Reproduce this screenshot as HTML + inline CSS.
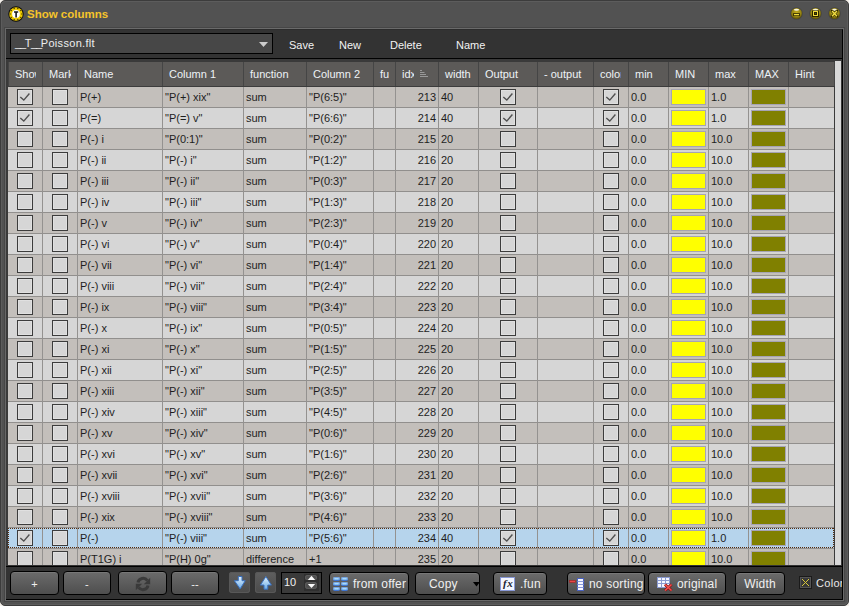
<!DOCTYPE html><html><head><meta charset="utf-8"><style>
*{margin:0;padding:0;box-sizing:border-box}
html,body{width:849px;height:606px;overflow:hidden;background:#f4f0ea}
body{font-family:"Liberation Sans",sans-serif;font-size:11px;position:relative}
.a{position:absolute}
#win{left:0;top:0;width:849px;height:606px;background:#525252;border:1px solid #3c3c3c;border-radius:5px}
#win2{left:1px;top:1px;width:847px;height:604px;border:1px solid #5c5c5c;border-radius:4px}
#title{left:27px;top:8px;font-weight:bold;font-size:11.5px;color:#f6c42a;letter-spacing:0px}
#panel{left:4px;top:27px;width:841px;height:575px;border:1px solid #464646;background:#333}
#pin{left:0;top:0;width:839px;height:573px;border:1px solid #686868;border-top-color:#6a6a6a}
#pin2{left:0;top:0;width:837px;height:571px;border-right:1px solid #000;border-bottom:1px solid #000;border-top:1px solid #2c2c2c}
#combo{left:10px;top:33px;width:263px;height:21px;border:1px solid #000;background:#474747;color:#eee}
.tb{top:39px;color:#f2f2f2;font-size:11px}
#tblbg{left:6px;top:59px;width:836px;height:506px;background:#3a3a3a}
#sep1{left:6px;top:58px;width:836px;height:1px;background:#000}
#sep2{left:6px;top:566px;width:836px;height:1px;background:#000}
#hdr{left:8px;top:62px;width:826px;height:25px;background:#5c5a58;border-bottom:1px solid #3c3c3c;border-left:1px solid #444}
.h{top:62px;height:24px;color:#eef2f6;line-height:24px;padding-left:6px;white-space:nowrap;overflow:hidden}
.hs{top:62px;width:1px;height:24px;background:#454545}
#rows{left:8px;top:87px;width:826px;height:478px;overflow:hidden}
.r{left:0;width:826px;height:21px;border-bottom:1px solid #918f8d}
.r0{background:#c3bfbb}
.r1{background:#d6d6d6}
.sel{background:#b6d4ec}
.vg{top:0;width:1px;height:478px;background:#949290}
.t{height:20px;line-height:20px;color:#1e1e1e;white-space:nowrap;overflow:hidden;padding-left:2px}
.cb{width:16px;height:16px;border:1px solid #3c3c3c;background:#d6d6d6;box-shadow:inset 0 0 0 1px #e0e0e0}
.sw{width:35px;height:16px;border:1px solid #a6a4b4}
#sb{left:835px;top:61px;width:6px;height:504px;background:#d8d8d8}
.btn{height:23px;border:1px solid #000;border-radius:4px;background:linear-gradient(#6b6b6b,#4e4e4e);color:#f0f0f0;font-size:12px;text-align:center;line-height:22px;letter-spacing:0.2px;box-shadow:inset 0 1px 0 #777}
</style></head><body>
<div id="win" class="a"></div><div id="win2" class="a"></div>
<svg class="a" style="left:8px;top:6px" width="16" height="16" viewBox="0 0 16 16"><circle cx="8" cy="8" r="7.7" fill="#0a0a0a"/><circle cx="8" cy="8" r="6.8" fill="#f0cc00"/><circle cx="13.90" cy="8.00" r="0.8" fill="#5a4a00"/><circle cx="12.77" cy="11.47" r="0.8" fill="#5a4a00"/><circle cx="9.82" cy="13.61" r="0.8" fill="#5a4a00"/><circle cx="6.18" cy="13.61" r="0.8" fill="#5a4a00"/><circle cx="3.23" cy="11.47" r="0.8" fill="#5a4a00"/><circle cx="2.10" cy="8.00" r="0.8" fill="#5a4a00"/><circle cx="3.23" cy="4.53" r="0.8" fill="#5a4a00"/><circle cx="6.18" cy="2.39" r="0.8" fill="#5a4a00"/><circle cx="9.82" cy="2.39" r="0.8" fill="#5a4a00"/><circle cx="12.77" cy="4.53" r="0.8" fill="#5a4a00"/><circle cx="8" cy="8" r="3.9" fill="#fff"/><path d="M6 5.2h4.2v1.6h-1.3v4.6h-1.6v-4.6h-1.3z" fill="#1a1a1a"/></svg>
<div id="title" class="a">Show columns</div>
<svg class="a" style="left:789px;top:6px" width="15" height="15" viewBox="-2 -2 15 15"><defs><radialGradient id="g0" cx="50%" cy="40%" r="60%"><stop offset="0" stop-color="#c0ac20"/><stop offset="0.6" stop-color="#9c8a14"/><stop offset="1" stop-color="#5a4e08"/></radialGradient></defs><circle cx="5.5" cy="5.5" r="6.3" fill="#3c3c3c" opacity="0.6"/><circle cx="5.5" cy="5.5" r="5.5" fill="url(#g0)"/><ellipse cx="5.5" cy="1.7" rx="2.6" ry="1" fill="#f8f4e0"/><rect x="2.2" y="5.1" width="6.6" height="2.9" fill="#2a2400"/><rect x="3" y="5.9" width="5" height="1.4" fill="#f0dc38"/></svg>
<svg class="a" style="left:808px;top:6px" width="15" height="15" viewBox="-2 -2 15 15"><defs><radialGradient id="g1" cx="50%" cy="40%" r="60%"><stop offset="0" stop-color="#c0ac20"/><stop offset="0.6" stop-color="#9c8a14"/><stop offset="1" stop-color="#5a4e08"/></radialGradient></defs><circle cx="5.5" cy="5.5" r="6.3" fill="#3c3c3c" opacity="0.6"/><circle cx="5.5" cy="5.5" r="5.5" fill="url(#g1)"/><ellipse cx="5.5" cy="1.7" rx="2.6" ry="1" fill="#f8f4e0"/><rect x="2" y="2.5" width="7" height="6.5" fill="#2a2400"/><rect x="3" y="3" width="5" height="5" fill="#f0dc38"/><rect x="4" y="4" width="3" height="3" fill="#2a2400"/><rect x="5.2" y="5.2" width="0.6" height="0.6" fill="#b0a020"/></svg>
<svg class="a" style="left:827px;top:6px" width="15" height="15" viewBox="-2 -2 15 15"><defs><radialGradient id="g2" cx="50%" cy="40%" r="60%"><stop offset="0" stop-color="#c0ac20"/><stop offset="0.6" stop-color="#9c8a14"/><stop offset="1" stop-color="#5a4e08"/></radialGradient></defs><circle cx="5.5" cy="5.5" r="6.3" fill="#3c3c3c" opacity="0.6"/><circle cx="5.5" cy="5.5" r="5.5" fill="url(#g2)"/><ellipse cx="5.5" cy="1.7" rx="2.6" ry="1" fill="#f8f4e0"/><path d="M3 3L8 8.2M8 3L3 8.2" stroke="#2a2400" stroke-width="2.6" stroke-linecap="round"/><path d="M3 3L8 8.2M8 3L3 8.2" stroke="#f4e040" stroke-width="1.5"/></svg>
<div id="panel" class="a"><div id="pin" class="a"><div id="pin2" class="a"></div></div></div>
<div id="combo" class="a"><span class="a" style="left:4px;top:3px;font-size:11px;white-space:nowrap"><span style="letter-spacing:-1.2px">__</span><span style="letter-spacing:-0.6px">T</span><span style="letter-spacing:-1.2px">__</span><span style="letter-spacing:0.3px">Poisson.flt</span></span><svg class="a" style="left:248px;top:8px" width="9" height="6"><path d="M0 0h9l-4.5 5z" fill="#ccc"/></svg></div>
<div class="a tb" style="left:289px">Save</div>
<div class="a tb" style="left:339px">New</div>
<div class="a tb" style="left:390px">Delete</div>
<div class="a tb" style="left:456px">Name</div>
<div id="sep1" class="a"></div><div id="tblbg" class="a"></div><div id="sep2" class="a"></div>
<div id="hdr" class="a"></div>
<div class="a h" style="left:9px;width:27px">Show</div>
<div class="a hs" style="left:42px"></div>
<div class="a h" style="left:43px;width:28px">Mark</div>
<div class="a hs" style="left:77px"></div>
<div class="a h" style="left:78px;width:78px">Name</div>
<div class="a hs" style="left:162px"></div>
<div class="a h" style="left:163px;width:74px">Column 1</div>
<div class="a hs" style="left:243px"></div>
<div class="a h" style="left:244px;width:56px">function</div>
<div class="a hs" style="left:306px"></div>
<div class="a h" style="left:307px;width:60px">Column 2</div>
<div class="a hs" style="left:373px"></div>
<div class="a h" style="left:374px;width:15px">function 2</div>
<div class="a hs" style="left:395px"></div>
<div class="a h" style="left:396px;width:18px">idx</div>
<div class="a hs" style="left:438px"></div>
<div class="a h" style="left:439px;width:34px">width</div>
<div class="a hs" style="left:478px"></div>
<div class="a h" style="left:479px;width:52px">Output</div>
<div class="a hs" style="left:537px"></div>
<div class="a h" style="left:538px;width:49px">- output</div>
<div class="a hs" style="left:593px"></div>
<div class="a h" style="left:594px;width:27px">color</div>
<div class="a hs" style="left:628px"></div>
<div class="a h" style="left:629px;width:33px">min</div>
<div class="a hs" style="left:668px"></div>
<div class="a h" style="left:669px;width:33px">MIN</div>
<div class="a hs" style="left:708px"></div>
<div class="a h" style="left:709px;width:33px">max</div>
<div class="a hs" style="left:748px"></div>
<div class="a h" style="left:749px;width:33px">MAX</div>
<div class="a hs" style="left:788px"></div>
<div class="a h" style="left:789px;width:39px">Hint</div>
<div class="a hs" style="left:834px"></div>
<svg class="a" style="left:420px;top:70px" width="9" height="8"><path d="M0 0.5h2M0 2.5h4.5M0 4.5h6M0 6.5h8" stroke="#999" stroke-width="1"/></svg>
<div id="rows" class="a">
<div class="a r r0" style="top:0px">
<div class="a cb" style="left:9px;top:2px"><svg class="a" style="left:1px;top:2px" width="12" height="10"><path d="M1.3 5L4.8 8.1L10.4 1.5" fill="none" stroke="#505050" stroke-width="1.4"/></svg></div>
<div class="a cb" style="left:44px;top:2px"></div>
<div class="a t" style="left:70px;width:84px">P(+)</div>
<div class="a t" style="left:155px;width:80px">"P(+) xix"</div>
<div class="a t" style="left:236px;width:62px">sum</div>
<div class="a t" style="left:299px;width:66px">"P(6:5)"</div>
<div class="a t" style="left:388px;width:42px;text-align:right;padding-right:2px;padding-left:0">213</div>
<div class="a t" style="left:431px;width:39px">40</div>
<div class="a cb" style="left:492px;top:2px"><svg class="a" style="left:1px;top:2px" width="12" height="10"><path d="M1.3 5L4.8 8.1L10.4 1.5" fill="none" stroke="#505050" stroke-width="1.4"/></svg></div>
<div class="a cb" style="left:595px;top:2px"><svg class="a" style="left:1px;top:2px" width="12" height="10"><path d="M1.3 5L4.8 8.1L10.4 1.5" fill="none" stroke="#505050" stroke-width="1.4"/></svg></div>
<div class="a t" style="left:621px;width:39px">0.0</div>
<div class="a sw" style="left:663px;top:2px;background:#ffff00"></div>
<div class="a t" style="left:701px;width:39px">1.0</div>
<div class="a sw" style="left:743px;top:2px;background:#808000"></div>
</div>
<div class="a r r1" style="top:21px">
<div class="a cb" style="left:9px;top:2px"><svg class="a" style="left:1px;top:2px" width="12" height="10"><path d="M1.3 5L4.8 8.1L10.4 1.5" fill="none" stroke="#505050" stroke-width="1.4"/></svg></div>
<div class="a cb" style="left:44px;top:2px"></div>
<div class="a t" style="left:70px;width:84px">P(=)</div>
<div class="a t" style="left:155px;width:80px">"P(=) v"</div>
<div class="a t" style="left:236px;width:62px">sum</div>
<div class="a t" style="left:299px;width:66px">"P(6:6)"</div>
<div class="a t" style="left:388px;width:42px;text-align:right;padding-right:2px;padding-left:0">214</div>
<div class="a t" style="left:431px;width:39px">40</div>
<div class="a cb" style="left:492px;top:2px"><svg class="a" style="left:1px;top:2px" width="12" height="10"><path d="M1.3 5L4.8 8.1L10.4 1.5" fill="none" stroke="#505050" stroke-width="1.4"/></svg></div>
<div class="a cb" style="left:595px;top:2px"><svg class="a" style="left:1px;top:2px" width="12" height="10"><path d="M1.3 5L4.8 8.1L10.4 1.5" fill="none" stroke="#505050" stroke-width="1.4"/></svg></div>
<div class="a t" style="left:621px;width:39px">0.0</div>
<div class="a sw" style="left:663px;top:2px;background:#ffff00"></div>
<div class="a t" style="left:701px;width:39px">1.0</div>
<div class="a sw" style="left:743px;top:2px;background:#808000"></div>
</div>
<div class="a r r0" style="top:42px">
<div class="a cb" style="left:9px;top:2px"></div>
<div class="a cb" style="left:44px;top:2px"></div>
<div class="a t" style="left:70px;width:84px">P(-) i</div>
<div class="a t" style="left:155px;width:80px">"P(0:1)"</div>
<div class="a t" style="left:236px;width:62px">sum</div>
<div class="a t" style="left:299px;width:66px">"P(0:2)"</div>
<div class="a t" style="left:388px;width:42px;text-align:right;padding-right:2px;padding-left:0">215</div>
<div class="a t" style="left:431px;width:39px">20</div>
<div class="a cb" style="left:492px;top:2px"></div>
<div class="a cb" style="left:595px;top:2px"></div>
<div class="a t" style="left:621px;width:39px">0.0</div>
<div class="a sw" style="left:663px;top:2px;background:#ffff00"></div>
<div class="a t" style="left:701px;width:39px">10.0</div>
<div class="a sw" style="left:743px;top:2px;background:#808000"></div>
</div>
<div class="a r r1" style="top:63px">
<div class="a cb" style="left:9px;top:2px"></div>
<div class="a cb" style="left:44px;top:2px"></div>
<div class="a t" style="left:70px;width:84px">P(-) ii</div>
<div class="a t" style="left:155px;width:80px">"P(-) i"</div>
<div class="a t" style="left:236px;width:62px">sum</div>
<div class="a t" style="left:299px;width:66px">"P(1:2)"</div>
<div class="a t" style="left:388px;width:42px;text-align:right;padding-right:2px;padding-left:0">216</div>
<div class="a t" style="left:431px;width:39px">20</div>
<div class="a cb" style="left:492px;top:2px"></div>
<div class="a cb" style="left:595px;top:2px"></div>
<div class="a t" style="left:621px;width:39px">0.0</div>
<div class="a sw" style="left:663px;top:2px;background:#ffff00"></div>
<div class="a t" style="left:701px;width:39px">10.0</div>
<div class="a sw" style="left:743px;top:2px;background:#808000"></div>
</div>
<div class="a r r0" style="top:84px">
<div class="a cb" style="left:9px;top:2px"></div>
<div class="a cb" style="left:44px;top:2px"></div>
<div class="a t" style="left:70px;width:84px">P(-) iii</div>
<div class="a t" style="left:155px;width:80px">"P(-) ii"</div>
<div class="a t" style="left:236px;width:62px">sum</div>
<div class="a t" style="left:299px;width:66px">"P(0:3)"</div>
<div class="a t" style="left:388px;width:42px;text-align:right;padding-right:2px;padding-left:0">217</div>
<div class="a t" style="left:431px;width:39px">20</div>
<div class="a cb" style="left:492px;top:2px"></div>
<div class="a cb" style="left:595px;top:2px"></div>
<div class="a t" style="left:621px;width:39px">0.0</div>
<div class="a sw" style="left:663px;top:2px;background:#ffff00"></div>
<div class="a t" style="left:701px;width:39px">10.0</div>
<div class="a sw" style="left:743px;top:2px;background:#808000"></div>
</div>
<div class="a r r1" style="top:105px">
<div class="a cb" style="left:9px;top:2px"></div>
<div class="a cb" style="left:44px;top:2px"></div>
<div class="a t" style="left:70px;width:84px">P(-) iv</div>
<div class="a t" style="left:155px;width:80px">"P(-) iii"</div>
<div class="a t" style="left:236px;width:62px">sum</div>
<div class="a t" style="left:299px;width:66px">"P(1:3)"</div>
<div class="a t" style="left:388px;width:42px;text-align:right;padding-right:2px;padding-left:0">218</div>
<div class="a t" style="left:431px;width:39px">20</div>
<div class="a cb" style="left:492px;top:2px"></div>
<div class="a cb" style="left:595px;top:2px"></div>
<div class="a t" style="left:621px;width:39px">0.0</div>
<div class="a sw" style="left:663px;top:2px;background:#ffff00"></div>
<div class="a t" style="left:701px;width:39px">10.0</div>
<div class="a sw" style="left:743px;top:2px;background:#808000"></div>
</div>
<div class="a r r0" style="top:126px">
<div class="a cb" style="left:9px;top:2px"></div>
<div class="a cb" style="left:44px;top:2px"></div>
<div class="a t" style="left:70px;width:84px">P(-) v</div>
<div class="a t" style="left:155px;width:80px">"P(-) iv"</div>
<div class="a t" style="left:236px;width:62px">sum</div>
<div class="a t" style="left:299px;width:66px">"P(2:3)"</div>
<div class="a t" style="left:388px;width:42px;text-align:right;padding-right:2px;padding-left:0">219</div>
<div class="a t" style="left:431px;width:39px">20</div>
<div class="a cb" style="left:492px;top:2px"></div>
<div class="a cb" style="left:595px;top:2px"></div>
<div class="a t" style="left:621px;width:39px">0.0</div>
<div class="a sw" style="left:663px;top:2px;background:#ffff00"></div>
<div class="a t" style="left:701px;width:39px">10.0</div>
<div class="a sw" style="left:743px;top:2px;background:#808000"></div>
</div>
<div class="a r r1" style="top:147px">
<div class="a cb" style="left:9px;top:2px"></div>
<div class="a cb" style="left:44px;top:2px"></div>
<div class="a t" style="left:70px;width:84px">P(-) vi</div>
<div class="a t" style="left:155px;width:80px">"P(-) v"</div>
<div class="a t" style="left:236px;width:62px">sum</div>
<div class="a t" style="left:299px;width:66px">"P(0:4)"</div>
<div class="a t" style="left:388px;width:42px;text-align:right;padding-right:2px;padding-left:0">220</div>
<div class="a t" style="left:431px;width:39px">20</div>
<div class="a cb" style="left:492px;top:2px"></div>
<div class="a cb" style="left:595px;top:2px"></div>
<div class="a t" style="left:621px;width:39px">0.0</div>
<div class="a sw" style="left:663px;top:2px;background:#ffff00"></div>
<div class="a t" style="left:701px;width:39px">10.0</div>
<div class="a sw" style="left:743px;top:2px;background:#808000"></div>
</div>
<div class="a r r0" style="top:168px">
<div class="a cb" style="left:9px;top:2px"></div>
<div class="a cb" style="left:44px;top:2px"></div>
<div class="a t" style="left:70px;width:84px">P(-) vii</div>
<div class="a t" style="left:155px;width:80px">"P(-) vi"</div>
<div class="a t" style="left:236px;width:62px">sum</div>
<div class="a t" style="left:299px;width:66px">"P(1:4)"</div>
<div class="a t" style="left:388px;width:42px;text-align:right;padding-right:2px;padding-left:0">221</div>
<div class="a t" style="left:431px;width:39px">20</div>
<div class="a cb" style="left:492px;top:2px"></div>
<div class="a cb" style="left:595px;top:2px"></div>
<div class="a t" style="left:621px;width:39px">0.0</div>
<div class="a sw" style="left:663px;top:2px;background:#ffff00"></div>
<div class="a t" style="left:701px;width:39px">10.0</div>
<div class="a sw" style="left:743px;top:2px;background:#808000"></div>
</div>
<div class="a r r1" style="top:189px">
<div class="a cb" style="left:9px;top:2px"></div>
<div class="a cb" style="left:44px;top:2px"></div>
<div class="a t" style="left:70px;width:84px">P(-) viii</div>
<div class="a t" style="left:155px;width:80px">"P(-) vii"</div>
<div class="a t" style="left:236px;width:62px">sum</div>
<div class="a t" style="left:299px;width:66px">"P(2:4)"</div>
<div class="a t" style="left:388px;width:42px;text-align:right;padding-right:2px;padding-left:0">222</div>
<div class="a t" style="left:431px;width:39px">20</div>
<div class="a cb" style="left:492px;top:2px"></div>
<div class="a cb" style="left:595px;top:2px"></div>
<div class="a t" style="left:621px;width:39px">0.0</div>
<div class="a sw" style="left:663px;top:2px;background:#ffff00"></div>
<div class="a t" style="left:701px;width:39px">10.0</div>
<div class="a sw" style="left:743px;top:2px;background:#808000"></div>
</div>
<div class="a r r0" style="top:210px">
<div class="a cb" style="left:9px;top:2px"></div>
<div class="a cb" style="left:44px;top:2px"></div>
<div class="a t" style="left:70px;width:84px">P(-) ix</div>
<div class="a t" style="left:155px;width:80px">"P(-) viii"</div>
<div class="a t" style="left:236px;width:62px">sum</div>
<div class="a t" style="left:299px;width:66px">"P(3:4)"</div>
<div class="a t" style="left:388px;width:42px;text-align:right;padding-right:2px;padding-left:0">223</div>
<div class="a t" style="left:431px;width:39px">20</div>
<div class="a cb" style="left:492px;top:2px"></div>
<div class="a cb" style="left:595px;top:2px"></div>
<div class="a t" style="left:621px;width:39px">0.0</div>
<div class="a sw" style="left:663px;top:2px;background:#ffff00"></div>
<div class="a t" style="left:701px;width:39px">10.0</div>
<div class="a sw" style="left:743px;top:2px;background:#808000"></div>
</div>
<div class="a r r1" style="top:231px">
<div class="a cb" style="left:9px;top:2px"></div>
<div class="a cb" style="left:44px;top:2px"></div>
<div class="a t" style="left:70px;width:84px">P(-) x</div>
<div class="a t" style="left:155px;width:80px">"P(-) ix"</div>
<div class="a t" style="left:236px;width:62px">sum</div>
<div class="a t" style="left:299px;width:66px">"P(0:5)"</div>
<div class="a t" style="left:388px;width:42px;text-align:right;padding-right:2px;padding-left:0">224</div>
<div class="a t" style="left:431px;width:39px">20</div>
<div class="a cb" style="left:492px;top:2px"></div>
<div class="a cb" style="left:595px;top:2px"></div>
<div class="a t" style="left:621px;width:39px">0.0</div>
<div class="a sw" style="left:663px;top:2px;background:#ffff00"></div>
<div class="a t" style="left:701px;width:39px">10.0</div>
<div class="a sw" style="left:743px;top:2px;background:#808000"></div>
</div>
<div class="a r r0" style="top:252px">
<div class="a cb" style="left:9px;top:2px"></div>
<div class="a cb" style="left:44px;top:2px"></div>
<div class="a t" style="left:70px;width:84px">P(-) xi</div>
<div class="a t" style="left:155px;width:80px">"P(-) x"</div>
<div class="a t" style="left:236px;width:62px">sum</div>
<div class="a t" style="left:299px;width:66px">"P(1:5)"</div>
<div class="a t" style="left:388px;width:42px;text-align:right;padding-right:2px;padding-left:0">225</div>
<div class="a t" style="left:431px;width:39px">20</div>
<div class="a cb" style="left:492px;top:2px"></div>
<div class="a cb" style="left:595px;top:2px"></div>
<div class="a t" style="left:621px;width:39px">0.0</div>
<div class="a sw" style="left:663px;top:2px;background:#ffff00"></div>
<div class="a t" style="left:701px;width:39px">10.0</div>
<div class="a sw" style="left:743px;top:2px;background:#808000"></div>
</div>
<div class="a r r1" style="top:273px">
<div class="a cb" style="left:9px;top:2px"></div>
<div class="a cb" style="left:44px;top:2px"></div>
<div class="a t" style="left:70px;width:84px">P(-) xii</div>
<div class="a t" style="left:155px;width:80px">"P(-) xi"</div>
<div class="a t" style="left:236px;width:62px">sum</div>
<div class="a t" style="left:299px;width:66px">"P(2:5)"</div>
<div class="a t" style="left:388px;width:42px;text-align:right;padding-right:2px;padding-left:0">226</div>
<div class="a t" style="left:431px;width:39px">20</div>
<div class="a cb" style="left:492px;top:2px"></div>
<div class="a cb" style="left:595px;top:2px"></div>
<div class="a t" style="left:621px;width:39px">0.0</div>
<div class="a sw" style="left:663px;top:2px;background:#ffff00"></div>
<div class="a t" style="left:701px;width:39px">10.0</div>
<div class="a sw" style="left:743px;top:2px;background:#808000"></div>
</div>
<div class="a r r0" style="top:294px">
<div class="a cb" style="left:9px;top:2px"></div>
<div class="a cb" style="left:44px;top:2px"></div>
<div class="a t" style="left:70px;width:84px">P(-) xiii</div>
<div class="a t" style="left:155px;width:80px">"P(-) xii"</div>
<div class="a t" style="left:236px;width:62px">sum</div>
<div class="a t" style="left:299px;width:66px">"P(3:5)"</div>
<div class="a t" style="left:388px;width:42px;text-align:right;padding-right:2px;padding-left:0">227</div>
<div class="a t" style="left:431px;width:39px">20</div>
<div class="a cb" style="left:492px;top:2px"></div>
<div class="a cb" style="left:595px;top:2px"></div>
<div class="a t" style="left:621px;width:39px">0.0</div>
<div class="a sw" style="left:663px;top:2px;background:#ffff00"></div>
<div class="a t" style="left:701px;width:39px">10.0</div>
<div class="a sw" style="left:743px;top:2px;background:#808000"></div>
</div>
<div class="a r r1" style="top:315px">
<div class="a cb" style="left:9px;top:2px"></div>
<div class="a cb" style="left:44px;top:2px"></div>
<div class="a t" style="left:70px;width:84px">P(-) xiv</div>
<div class="a t" style="left:155px;width:80px">"P(-) xiii"</div>
<div class="a t" style="left:236px;width:62px">sum</div>
<div class="a t" style="left:299px;width:66px">"P(4:5)"</div>
<div class="a t" style="left:388px;width:42px;text-align:right;padding-right:2px;padding-left:0">228</div>
<div class="a t" style="left:431px;width:39px">20</div>
<div class="a cb" style="left:492px;top:2px"></div>
<div class="a cb" style="left:595px;top:2px"></div>
<div class="a t" style="left:621px;width:39px">0.0</div>
<div class="a sw" style="left:663px;top:2px;background:#ffff00"></div>
<div class="a t" style="left:701px;width:39px">10.0</div>
<div class="a sw" style="left:743px;top:2px;background:#808000"></div>
</div>
<div class="a r r0" style="top:336px">
<div class="a cb" style="left:9px;top:2px"></div>
<div class="a cb" style="left:44px;top:2px"></div>
<div class="a t" style="left:70px;width:84px">P(-) xv</div>
<div class="a t" style="left:155px;width:80px">"P(-) xiv"</div>
<div class="a t" style="left:236px;width:62px">sum</div>
<div class="a t" style="left:299px;width:66px">"P(0:6)"</div>
<div class="a t" style="left:388px;width:42px;text-align:right;padding-right:2px;padding-left:0">229</div>
<div class="a t" style="left:431px;width:39px">20</div>
<div class="a cb" style="left:492px;top:2px"></div>
<div class="a cb" style="left:595px;top:2px"></div>
<div class="a t" style="left:621px;width:39px">0.0</div>
<div class="a sw" style="left:663px;top:2px;background:#ffff00"></div>
<div class="a t" style="left:701px;width:39px">10.0</div>
<div class="a sw" style="left:743px;top:2px;background:#808000"></div>
</div>
<div class="a r r1" style="top:357px">
<div class="a cb" style="left:9px;top:2px"></div>
<div class="a cb" style="left:44px;top:2px"></div>
<div class="a t" style="left:70px;width:84px">P(-) xvi</div>
<div class="a t" style="left:155px;width:80px">"P(-) xv"</div>
<div class="a t" style="left:236px;width:62px">sum</div>
<div class="a t" style="left:299px;width:66px">"P(1:6)"</div>
<div class="a t" style="left:388px;width:42px;text-align:right;padding-right:2px;padding-left:0">230</div>
<div class="a t" style="left:431px;width:39px">20</div>
<div class="a cb" style="left:492px;top:2px"></div>
<div class="a cb" style="left:595px;top:2px"></div>
<div class="a t" style="left:621px;width:39px">0.0</div>
<div class="a sw" style="left:663px;top:2px;background:#ffff00"></div>
<div class="a t" style="left:701px;width:39px">10.0</div>
<div class="a sw" style="left:743px;top:2px;background:#808000"></div>
</div>
<div class="a r r0" style="top:378px">
<div class="a cb" style="left:9px;top:2px"></div>
<div class="a cb" style="left:44px;top:2px"></div>
<div class="a t" style="left:70px;width:84px">P(-) xvii</div>
<div class="a t" style="left:155px;width:80px">"P(-) xvi"</div>
<div class="a t" style="left:236px;width:62px">sum</div>
<div class="a t" style="left:299px;width:66px">"P(2:6)"</div>
<div class="a t" style="left:388px;width:42px;text-align:right;padding-right:2px;padding-left:0">231</div>
<div class="a t" style="left:431px;width:39px">20</div>
<div class="a cb" style="left:492px;top:2px"></div>
<div class="a cb" style="left:595px;top:2px"></div>
<div class="a t" style="left:621px;width:39px">0.0</div>
<div class="a sw" style="left:663px;top:2px;background:#ffff00"></div>
<div class="a t" style="left:701px;width:39px">10.0</div>
<div class="a sw" style="left:743px;top:2px;background:#808000"></div>
</div>
<div class="a r r1" style="top:399px">
<div class="a cb" style="left:9px;top:2px"></div>
<div class="a cb" style="left:44px;top:2px"></div>
<div class="a t" style="left:70px;width:84px">P(-) xviii</div>
<div class="a t" style="left:155px;width:80px">"P(-) xvii"</div>
<div class="a t" style="left:236px;width:62px">sum</div>
<div class="a t" style="left:299px;width:66px">"P(3:6)"</div>
<div class="a t" style="left:388px;width:42px;text-align:right;padding-right:2px;padding-left:0">232</div>
<div class="a t" style="left:431px;width:39px">20</div>
<div class="a cb" style="left:492px;top:2px"></div>
<div class="a cb" style="left:595px;top:2px"></div>
<div class="a t" style="left:621px;width:39px">0.0</div>
<div class="a sw" style="left:663px;top:2px;background:#ffff00"></div>
<div class="a t" style="left:701px;width:39px">10.0</div>
<div class="a sw" style="left:743px;top:2px;background:#808000"></div>
</div>
<div class="a r r0" style="top:420px">
<div class="a cb" style="left:9px;top:2px"></div>
<div class="a cb" style="left:44px;top:2px"></div>
<div class="a t" style="left:70px;width:84px">P(-) xix</div>
<div class="a t" style="left:155px;width:80px">"P(-) xviii"</div>
<div class="a t" style="left:236px;width:62px">sum</div>
<div class="a t" style="left:299px;width:66px">"P(4:6)"</div>
<div class="a t" style="left:388px;width:42px;text-align:right;padding-right:2px;padding-left:0">233</div>
<div class="a t" style="left:431px;width:39px">20</div>
<div class="a cb" style="left:492px;top:2px"></div>
<div class="a cb" style="left:595px;top:2px"></div>
<div class="a t" style="left:621px;width:39px">0.0</div>
<div class="a sw" style="left:663px;top:2px;background:#ffff00"></div>
<div class="a t" style="left:701px;width:39px">10.0</div>
<div class="a sw" style="left:743px;top:2px;background:#808000"></div>
</div>
<div class="a r sel" style="top:441px">
<div class="a cb" style="left:9px;top:2px"><svg class="a" style="left:1px;top:2px" width="12" height="10"><path d="M1.3 5L4.8 8.1L10.4 1.5" fill="none" stroke="#505050" stroke-width="1.4"/></svg></div>
<div class="a cb" style="left:44px;top:2px"></div>
<div class="a t" style="left:70px;width:84px">P(-)</div>
<div class="a t" style="left:155px;width:80px">"P(-) viii"</div>
<div class="a t" style="left:236px;width:62px">sum</div>
<div class="a t" style="left:299px;width:66px">"P(5:6)"</div>
<div class="a t" style="left:388px;width:42px;text-align:right;padding-right:2px;padding-left:0">234</div>
<div class="a t" style="left:431px;width:39px">40</div>
<div class="a cb" style="left:492px;top:2px"><svg class="a" style="left:1px;top:2px" width="12" height="10"><path d="M1.3 5L4.8 8.1L10.4 1.5" fill="none" stroke="#505050" stroke-width="1.4"/></svg></div>
<div class="a cb" style="left:595px;top:2px"><svg class="a" style="left:1px;top:2px" width="12" height="10"><path d="M1.3 5L4.8 8.1L10.4 1.5" fill="none" stroke="#505050" stroke-width="1.4"/></svg></div>
<div class="a t" style="left:621px;width:39px">0.0</div>
<div class="a sw" style="left:663px;top:2px;background:#ffff00"></div>
<div class="a t" style="left:701px;width:39px">1.0</div>
<div class="a sw" style="left:743px;top:2px;background:#808000"></div>
</div>
<div class="a r r0" style="top:462px">
<div class="a cb" style="left:9px;top:2px"></div>
<div class="a cb" style="left:44px;top:2px"></div>
<div class="a t" style="left:70px;width:84px">P(T1G) i</div>
<div class="a t" style="left:155px;width:80px">"P(H) 0g"</div>
<div class="a t" style="left:236px;width:62px">difference</div>
<div class="a t" style="left:299px;width:66px">+1</div>
<div class="a t" style="left:388px;width:42px;text-align:right;padding-right:2px;padding-left:0">235</div>
<div class="a t" style="left:431px;width:39px">20</div>
<div class="a cb" style="left:492px;top:2px"></div>
<div class="a cb" style="left:595px;top:2px"></div>
<div class="a t" style="left:621px;width:39px">0.0</div>
<div class="a sw" style="left:663px;top:2px;background:#ffff00"></div>
<div class="a t" style="left:701px;width:39px">10.0</div>
<div class="a sw" style="left:743px;top:2px;background:#808000"></div>
</div>
<div class="a vg" style="left:34px"></div>
<div class="a vg" style="left:69px"></div>
<div class="a vg" style="left:154px"></div>
<div class="a vg" style="left:235px"></div>
<div class="a vg" style="left:298px"></div>
<div class="a vg" style="left:365px"></div>
<div class="a vg" style="left:387px"></div>
<div class="a vg" style="left:430px"></div>
<div class="a vg" style="left:470px"></div>
<div class="a vg" style="left:529px"></div>
<div class="a vg" style="left:585px"></div>
<div class="a vg" style="left:620px"></div>
<div class="a vg" style="left:660px"></div>
<div class="a vg" style="left:700px"></div>
<div class="a vg" style="left:740px"></div>
<div class="a vg" style="left:780px"></div>
<div class="a vg" style="left:826px"></div>
</div>
<div class="a" style="left:8px;top:528px;width:826px;height:1px;background:repeating-linear-gradient(90deg,#5a2a08 0 1px,transparent 1px 2px)"></div>
<div class="a" style="left:8px;top:547px;width:826px;height:1px;background:repeating-linear-gradient(90deg,#5a2a08 0 1px,transparent 1px 2px)"></div>
<div class="a" style="left:8px;top:528px;width:1px;height:20px;background:repeating-linear-gradient(180deg,#5a2a08 0 1px,transparent 1px 2px)"></div>
<div class="a" style="left:833px;top:528px;width:1px;height:20px;background:repeating-linear-gradient(180deg,#5a2a08 0 1px,transparent 1px 2px)"></div>
<div id="sb" class="a"></div>
<div class="a btn" style="left:10px;top:571px;width:49px;height:24px;line-height:24px;font-size:11px">+</div>
<div class="a btn" style="left:63px;top:571px;width:48px;height:24px;line-height:24px;font-size:11px">-</div>
<div class="a btn" style="left:118px;top:571px;width:49px;height:24px;line-height:24px;font-size:11px"></div>
<div class="a btn" style="left:171px;top:571px;width:48px;height:24px;line-height:24px;font-size:11px">--</div>
<svg class="a" style="left:132px;top:574px" width="22" height="20" viewBox="0 0 22 20"><g fill="none" stroke="#3a3a3a" stroke-width="3"><path d="M6 8.6A5.2 5.2 0 0 1 15.4 6.6"/><path d="M16 11.4A5.2 5.2 0 0 1 6.6 13.4"/></g><path d="M18.2 3.8V10.2H11.8z" fill="#3a3a3a"/><path d="M3.8 16.2V9.8H10.2z" fill="#3a3a3a"/></svg>
<div class="a" style="left:229px;top:572px;width:21px;height:21px;border-radius:3px;background:linear-gradient(#5f5f5f,#4a4a4a);box-shadow:inset 0 0 0 1px #585858"></div>
<div class="a" style="left:255px;top:572px;width:21px;height:21px;border-radius:3px;background:linear-gradient(#5f5f5f,#4a4a4a);box-shadow:inset 0 0 0 1px #585858"></div>
<svg class="a" style="left:229px;top:572px" width="22" height="22" viewBox="0 0 22 22"><defs><linearGradient id="ab" x1="0" y1="0" x2="0" y2="1"><stop offset="0" stop-color="#e4f4ff"/><stop offset="1" stop-color="#6aaae6"/></linearGradient></defs><path d="M9.3 4.5H13V8.7H16.2L11.15 17L5.4 8.7H9.3z" fill="url(#ab)" stroke="#3870c0" stroke-width="1" stroke-linejoin="round"/></svg>
<svg class="a" style="left:255px;top:572px" width="22" height="22" viewBox="0 0 22 22"><path d="M10.9 4.6L16.4 13.1H12.8V17.2H9V13.1H5.4z" fill="url(#ab)" stroke="#3870c0" stroke-width="1" stroke-linejoin="round"/></svg>
<div class="a" style="left:281px;top:572px;width:41px;height:22px;border:1px solid #000;background:#3a3a3a"></div>
<div class="a" style="left:284px;top:576px;color:#f0f0f0;font-size:11px">10</div>
<div class="a" style="left:304px;top:574px;width:15px;height:17px;background:#2f2f2f"></div>
<div class="a" style="left:305px;top:575px;width:12px;height:5px;border-radius:2.5px;background:#4e4e4e;box-shadow:inset 0 0 0 1px #5a5a5a"></div>
<div class="a" style="left:305px;top:582px;width:12px;height:7px;border-radius:3px;background:#4e4e4e;box-shadow:inset 0 0 0 1px #5a5a5a"></div>
<svg class="a" style="left:305px;top:575px" width="12" height="14"><path d="M2.8 4.9L6.5 0.8L10.2 4.9z" fill="#fafafa"/><path d="M2.8 9L6.5 13L10.2 9z" fill="#fafafa"/></svg>
<div class="a btn" style="left:329px;top:572px;width:80px;text-align:left;padding-left:23px">from offer</div>
<svg class="a" style="left:333px;top:577px" width="16" height="15"><defs><linearGradient id="bb" x1="0" y1="0" x2="0" y2="1"><stop offset="0" stop-color="#c8ecff"/><stop offset="0.55" stop-color="#98d0f8"/><stop offset="1" stop-color="#2a5cc0"/></linearGradient></defs><rect x="0" y="0" width="7" height="4" rx="1.8" fill="url(#bb)"/><rect x="0.5" y="0.5" width="6" height="3" rx="1.5" fill="none" stroke="#3a70d0" stroke-width="0.8" opacity="0.7"/><rect x="0" y="5" width="7" height="4" rx="1.8" fill="url(#bb)"/><rect x="0.5" y="5.5" width="6" height="3" rx="1.5" fill="none" stroke="#3a70d0" stroke-width="0.8" opacity="0.7"/><rect x="0" y="10" width="7" height="4" rx="1.8" fill="url(#bb)"/><rect x="0.5" y="10.5" width="6" height="3" rx="1.5" fill="none" stroke="#3a70d0" stroke-width="0.8" opacity="0.7"/><rect x="8" y="0" width="7" height="4" rx="1.8" fill="url(#bb)"/><rect x="8.5" y="0.5" width="6" height="3" rx="1.5" fill="none" stroke="#3a70d0" stroke-width="0.8" opacity="0.7"/><rect x="8" y="5" width="7" height="4" rx="1.8" fill="url(#bb)"/><rect x="8.5" y="5.5" width="6" height="3" rx="1.5" fill="none" stroke="#3a70d0" stroke-width="0.8" opacity="0.7"/><rect x="8" y="10" width="7" height="4" rx="1.8" fill="url(#bb)"/><rect x="8.5" y="10.5" width="6" height="3" rx="1.5" fill="none" stroke="#3a70d0" stroke-width="0.8" opacity="0.7"/></svg>
<div class="a btn" style="left:415px;top:572px;width:65px;text-align:left;padding-left:13px">Copy</div>
<svg class="a" style="left:473px;top:582px" width="7" height="5"><path d="M0 0h7L3.5 4.5z" fill="#000"/></svg>
<div class="a btn" style="left:493px;top:572px;width:54px;text-align:left;padding-left:26px">.fun</div>
<div class="a" style="left:500px;top:577px;width:15px;height:14px;border:1px solid #8898d8;background:#f4f6ff"></div>
<div class="a" style="left:503px;top:577px;font-family:'Liberation Serif',serif;font-style:italic;font-weight:bold;font-size:11px;letter-spacing:0.6px;color:#1a2030">fx</div>
<div class="a btn" style="left:567px;top:572px;width:78px;text-align:left;padding-left:21px">no sorting</div>
<svg class="a" style="left:569px;top:577px" width="16" height="14"><rect x="0.5" y="3.5" width="6" height="2" fill="#e84848" stroke="#a02020" stroke-width="0.6"/><rect x="8.5" y="1.5" width="6" height="12" fill="#f8f8ff" stroke="#4a62c0" stroke-width="1"/><path d="M8.5 4.5h6M8.5 7.5h6M8.5 10.5h6" stroke="#8a9ad8" stroke-width="1"/></svg>
<div class="a btn" style="left:648px;top:572px;width:78px;text-align:left;padding-left:28px">original</div>
<svg class="a" style="left:656px;top:576px" width="18" height="16"><rect x="1.5" y="1.5" width="12" height="10" fill="#f4f6ff" stroke="#8a9ad0" stroke-width="1"/><path d="M1.5 4.5h12M1.5 7.5h12M5.5 1.5v10M9.5 1.5v10" stroke="#8a9ad0" stroke-width="1"/><path d="M9 8.5L15.5 14.5M15.5 8.5L9 14.5" stroke="#8a1010" stroke-width="3"/><path d="M9 8.5L15.5 14.5M15.5 8.5L9 14.5" stroke="#f05050" stroke-width="1.6"/></svg>
<div class="a btn" style="left:735px;top:572px;width:50px">Width</div>
<div class="a" style="left:799px;top:576px;width:13px;height:13px;border:1px solid #1a1a1a;background:#383838;box-shadow:inset 0 0 0 1px #555"></div>
<svg class="a" style="left:799px;top:576px" width="13" height="13"><path d="M3 3L10 10M10 3L3 10" stroke="#d8c838" stroke-width="1"/></svg>
<div class="a" style="left:816px;top:577px;width:26px;overflow:hidden;color:#e8e8e8;font-size:11px;letter-spacing:0.3px;white-space:nowrap">Color</div>
</body></html>
